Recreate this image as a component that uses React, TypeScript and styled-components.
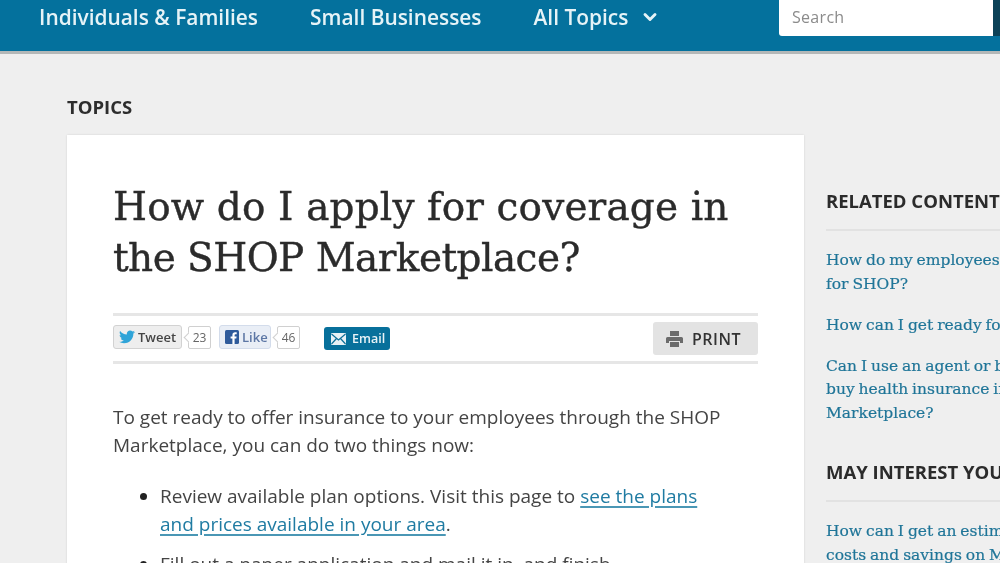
import React from "react";
import styled, { createGlobalStyle } from "styled-components";
import { ChevronDown } from "lucide-react";

const Global = createGlobalStyle`
  html, body {
    margin: 0;
    height: 563px;
    overflow: hidden;
    background: #efefef;
    font-family: "Open Sans", "Liberation Sans", sans-serif;
    color: #333;
  }
  * { box-sizing: border-box; }
`;

const TwitterBird = () => (
  <svg width="16" height="14" viewBox="0 0 24 20">
    <path
      fill="#2fa4d8"
      d="M24 2.4c-.9.4-1.8.7-2.8.8 1-.6 1.8-1.6 2.2-2.7-1 .6-2 1-3.100 1.200C19.300.7 18 .1 16.600.1c-2.700 0-4.900 2.200-4.900 4.900 0 .4 0 .8.100 1.100C7.700 5.900 4.100 4 1.700.9 1.200 1.600 1 2.500 1 3.400c0 1.700.9 3.200 2.200 4.100-.8 0-1.600-.2-2.200-.6v.1c0 2.400 1.700 4.400 3.900 4.800-.4.100-.8.200-1.300.2-.3 0-.6 0-.9-.1.600 2 2.400 3.400 4.600 3.400-1.700 1.300-3.800 2.100-6.100 2.100-.4 0-.8 0-1.200-.1C2.200 18.700 4.800 19.500 7.500 19.500c9.100 0 14-7.500 14-14v-.6c1-.7 1.800-1.600 2.500-2.500z"
    />
  </svg>
);

const FacebookMark = () => (
  <svg width="14" height="14" viewBox="0 0 14 14">
    <rect width="14" height="14" rx="1.500" fill="#2f5b9b" />
    <path fill="#fff" d="M9.600 14V8.600h1.700l.3-2.100h-2V5.200c0-.6.200-1 1-1h1.100V2.300c-.2 0-.8-.1-1.600-.1-1.600 0-2.700 1-2.700 2.800v1.500H5.600v2.100h1.800V14z" />
  </svg>
);

const MailIcon = () => (
  <svg width="15" height="12" viewBox="0 0 15 12">
    <rect width="15" height="12" rx="1" fill="#e8f1f5" />
    <path d="M0.500 1 7.500 7 14.500 1M0.500 11 5.500 5.500M14.500 11 9.500 5.500" fill="none" stroke="#0d6f99" strokeWidth="1.200" />
  </svg>
);

const PrinterIcon = () => (
  <svg width="17" height="16" viewBox="0 0 17 16">
    <path fill="#6b6b6b" d="M4 0h9v5H4zM1.500 6h14A1.500 1.500 0 0 1 17 7.500V12h-3v-2H3v2H0V7.500A1.500 1.500 0 0 1 1.500 6zM4 11h9v5H4z" />
  </svg>
);

const Page = styled.div`
  height: 563px;
  overflow: hidden;
  filter: blur(0.45px);
  background-color: #efefef;
`;

const Header = styled.header`
  height: 54px;
  background: #04719d;
  border-bottom: 3px solid #b4b8b8;
  display: flex;
  align-items: flex-start;
  padding-left: 39px;
  overflow: hidden;
`;

const NavLink = styled.a`
  font-size: 20.9px;
  font-weight: 600;
  line-height: 34px;
  color: #e6f3f7;
  margin-right: 52px;
  white-space: nowrap;
  display: flex;
  align-items: center;
  gap: 12px;
`;

const SearchGroup = styled.div`
  margin-left: auto;
  display: flex;
  height: 36px;
`;

const SearchBox = styled.div`
  width: 214px;
  background: #fff;
  border-radius: 0 0 0 3px;
  padding-left: 13px;
  font-size: 16px;
  line-height: 34px;
  color: #8b8b8b;
  letter-spacing: 0.3px;
`;

const SearchEdge = styled.div`
  width: 7px;
  background: #0c4258;
`;

const Main = styled.main`
  padding: 41px 0 0 67px;
`;

const Crumb = styled.div`
  font-size: 18.5px;
  font-weight: 700;
  line-height: 24px;
  color: #2d2d2d;
  margin-bottom: 16px;
`;

const Columns = styled.div`
  display: flex;
  align-items: flex-start;
  width: 1100px;
`;

const Card = styled.article`
  width: 737px;
  flex: none;
  height: 600px;
  background: #fff;
  box-shadow: 0 0 2px rgba(0, 0, 0, 0.12);
  padding: 46px 46px 0;
`;

const Title = styled.h1`
  margin: 0 0 30px;
  font-family: "DejaVu Serif", "Liberation Serif", serif;
  font-weight: 400;
  font-size: 39px;
  line-height: 51px;
  color: #2b2b2b;
  white-space: nowrap;
  -webkit-text-stroke: 0.4px #2b2b2b;
`;

const TitleLine = styled.span<{ $tracking: number }>`
  display: block;
  letter-spacing: ${(p) => p.$tracking}px;
`;

const ShareBar = styled.div`
  height: 51px;
  border-top: 3px solid #e6e6e6;
  border-bottom: 3px solid #e6e6e6;
  display: flex;
  align-items: center;
`;

const SocialButton = styled.span<{ $bg: string; $border: string; $color: string; $width: number }>`
  display: inline-flex;
  align-items: center;
  gap: 3px;
  width: ${(p) => p.$width}px;
  height: 24px;
  margin-bottom: 3px;
  padding-left: 5px;
  border: 1px solid ${(p) => p.$border};
  border-radius: 3px;
  background: ${(p) => p.$bg};
  color: ${(p) => p.$color};
  font-size: 13px;
  font-weight: 600;
`;

const Count = styled.span<{ $gapAfter: number }>`
  position: relative;
  display: inline-flex;
  align-items: center;
  justify-content: center;
  width: 23px;
  height: 23px;
  margin: 0 ${(p) => p.$gapAfter}px 3px 6px;
  border: 1px solid #d0d0d0;
  border-radius: 2px;
  font-size: 12px;
  color: #666;
  &::before {
    content: "";
    position: absolute;
    left: -4px;
    top: 7px;
    width: 6px;
    height: 6px;
    background: #fff;
    border-left: 1px solid #d0d0d0;
    border-bottom: 1px solid #d0d0d0;
    transform: rotate(45deg);
  }
`;

const EmailButton = styled.span`
  display: inline-flex;
  align-items: center;
  gap: 6px;
  height: 23px;
  width: 66px;
  padding-left: 7px;
  border-radius: 3px;
  background: #07709b;
  color: #e8f3f7;
  font-size: 12.5px;
  font-weight: 600;
`;

const PrintButton = styled.span`
  margin-left: auto;
  display: inline-flex;
  align-items: center;
  gap: 9px;
  width: 105px;
  height: 33px;
  padding-left: 13px;
  border-radius: 3px;
  background: #e3e3e3;
  color: #333;
  font-size: 16px;
  font-weight: 600;
  letter-spacing: 0.5px;
`;

const Lead = styled.p`
  margin: 39px 0 23px;
  font-size: 19px;
  line-height: 28px;
  color: #444;
  white-space: nowrap;
`;

const Bullets = styled.ul`
  margin: 0;
  padding-left: 47px;
  font-size: 19px;
  line-height: 28px;
  color: #444;
  white-space: nowrap;
`;

const Bullet = styled.li`
  margin-bottom: 12px;
  &::marker {
    color: #222;
  }
`;

const BodyLink = styled.a`
  color: #1f7ba2;
  text-decoration: underline;
  text-decoration-color: #4a97b5;
  text-decoration-thickness: 2px;
  text-underline-offset: 3px;
`;

const Sidebar = styled.aside`
  margin: 54px 0 0 22px;
  width: 300px;
  flex: none;
`;

const SideHeading = styled.h3`
  margin: 0 0 18px;
  padding-bottom: 16px;
  border-bottom: 2px solid #e2e2e2;
  font-size: 18.5px;
  line-height: 24px;
  font-weight: 700;
  color: #2b2b2b;
  white-space: nowrap;
`;

const SideList = styled.div`
  display: flex;
  flex-direction: column;
  gap: 17.5px;
  margin-bottom: 35px;
`;

const SideLink = styled.a`
  font-family: "DejaVu Serif", "Liberation Serif", serif;
  font-size: 15.5px;
  line-height: 23.5px;
  word-spacing: -1px;
  color: #1f7598;
  white-space: nowrap;
  -webkit-text-stroke: 0.2px #1f7598;
`;

export default function App() {
  return (
    <Page>
      <Global />
      <Header>
        <NavLink>Individuals &amp; Families</NavLink>
        <NavLink>Small Businesses</NavLink>
        <NavLink>
          All Topics <ChevronDown size={20} strokeWidth={3.5} />
        </NavLink>
        <SearchGroup>
          <SearchBox>Search</SearchBox>
          <SearchEdge />
        </SearchGroup>
      </Header>
      <Main>
        <Crumb>TOPICS</Crumb>
        <Columns>
          <Card>
            <Title>
              <TitleLine $tracking={0.14}>How do I apply for coverage in</TitleLine>
              <TitleLine $tracking={-0.55}>the SHOP Marketplace?</TitleLine>
            </Title>
            <ShareBar>
              <SocialButton $bg="#eeeeee" $border="#d2d2d2" $color="#444" $width={69}>
                <TwitterBird /> Tweet
              </SocialButton>
              <Count $gapAfter={8}>23</Count>
              <SocialButton $bg="#e9eef6" $border="#d3dceb" $color="#5d77a5" $width={52}>
                <FacebookMark /> Like
              </SocialButton>
              <Count $gapAfter={24}>46</Count>
              <EmailButton>
                <MailIcon /> Email
              </EmailButton>
              <PrintButton>
                <PrinterIcon /> PRINT
              </PrintButton>
            </ShareBar>
            <Lead>
              To get ready to offer insurance to your employees through the SHOP
              <br />
              Marketplace, you can do two things now:
            </Lead>
            <Bullets>
              <Bullet>
                Review available plan options. Visit this page to <BodyLink>see the plans</BodyLink>
                <br />
                <BodyLink>and prices available in your area</BodyLink>.
              </Bullet>
              <Bullet>Fill out a paper application and mail it in, and finish</Bullet>
            </Bullets>
          </Card>
          <Sidebar>
            <SideHeading>RELATED CONTENT</SideHeading>
            <SideList>
              <SideLink>
                How do my employees apply
                <br />
                for SHOP?
              </SideLink>
              <SideLink>How can I get ready for SHOP?</SideLink>
              <SideLink>
                Can I use an agent or broker to
                <br />
                buy health insurance in the
                <br />
                Marketplace?
              </SideLink>
            </SideList>
            <SideHeading>MAY INTEREST YOU</SideHeading>
            <SideList>
              <SideLink>
                How can I get an estimate of my
                <br />
                costs and savings on Marketplace?
              </SideLink>
            </SideList>
          </Sidebar>
        </Columns>
      </Main>
    </Page>
  );
}
